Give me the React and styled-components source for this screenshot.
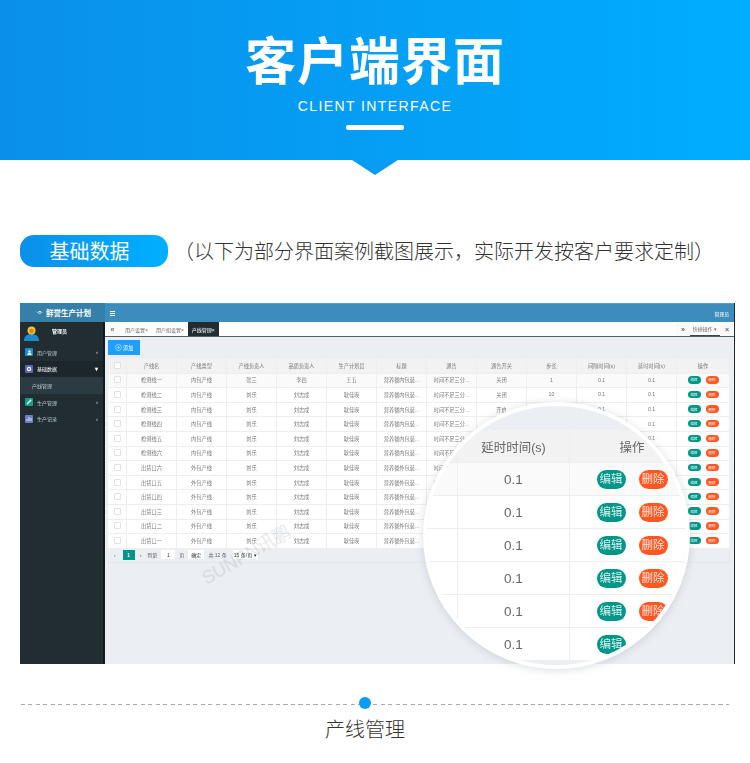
import React from 'react'
import styled, { createGlobalStyle } from 'styled-components'

const GlobalStyle = createGlobalStyle`
  html, body { margin: 0; padding: 0; background: #fff; }
  body { font-family: "Liberation Sans", "Noto Sans CJK SC", sans-serif; }
  * { box-sizing: border-box; }
`

const Page = styled.div`
  width: 750px;
  height: 763px;
  overflow: hidden;
  background: #fff;
`

const Banner = styled.header`
  position: relative;
  height: 160px;
  padding-top: 26px;
  display: flex;
  flex-direction: column;
  align-items: center;
  color: #fff;
  background: linear-gradient(90deg, #0a90ea 0%, #00adff 100%);
  &::after {
    content: "";
    position: absolute;
    left: 352px;
    top: 160px;
    border-left: 23px solid transparent;
    border-right: 23px solid transparent;
    border-top: 15px solid #0a9cf0;
  }
`

const Title = styled.h1`
  margin: 0;
  font: 700 51px/64px "Noto Sans CJK SC", sans-serif;
  letter-spacing: 1px;
`

const SubTitle = styled.div`
  margin-top: 7px;
  font: 400 14px/18px "Liberation Sans", sans-serif;
  letter-spacing: 1.4px;
`

const Bar = styled.div`
  margin-top: 10px;
  width: 58px;
  height: 5px;
  border-radius: 2px;
  background: #fff;
`

const SectionRow = styled.div`
  margin-top: 75px;
  padding-left: 20px;
  display: flex;
  align-items: center;
  gap: 6px;
`

const Pill = styled.div`
  width: 148px;
  height: 32px;
  padding-right: 9px;
  border-radius: 14px;
  display: flex;
  align-items: center;
  justify-content: center;
  color: #fff;
  font: 400 20px/32px "Noto Sans CJK SC", sans-serif;
  background: linear-gradient(90deg, #0a90ea, #00b0ff);
`

const Note = styled.div`
  color: #333;
  font: 300 20px/32px "Noto Sans CJK SC", sans-serif;
`

const ShotWrap = styled.div`
  position: relative;
  margin: 36px 0 0 20px;
  width: 715px;
  height: 361px;
`

const Shot = styled.div`
  width: 715px;
  height: 361px;
  display: grid;
  grid-template-columns: 85px 1fr;
  grid-template-rows: 19px 1fr;
  font-family: "Liberation Sans", "Noto Sans CJK SC", sans-serif;
  filter: blur(0.45px);
  border-right: 1px solid #1a2a33;
`

const LogoCell = styled.div`
  background: #367fa9;
  display: flex;
  align-items: center;
  padding-left: 16px;
  gap: 3px;
  color: #fff;
  font-size: 7.5px;
  font-weight: 700;
`

const TopBar = styled.div`
  background: #3c8dbc;
  border-top: 1px solid #5a9ec8;
  display: flex;
  align-items: center;
  justify-content: space-between;
  padding: 0 5px 0 5px;
  color: #fff;
  font-size: 4.8px;
`

const Side = styled.aside`
  background: #222d32;
  border-right: 2px solid #101a1f;
  color: #b8c7ce;
  font-size: 5px;
`

const UserBox = styled.div`
  height: 22px;
  display: flex;
  gap: 13px;
  padding: 4px 0 0 4px;
  color: #fff;
  font-size: 5px;
  font-weight: 700;
  span { margin-top: 1px; }
`

const MenuItem = styled.div`
  height: 16.5px;
  display: flex;
  align-items: center;
  padding: 0 5px 0 5px;
  gap: 4px;
  background: ${p => (p.$active ? '#1c262b' : 'transparent')};
  color: ${p => (p.$active ? '#fff' : '#b8c7ce')};
  b { font-weight: 400; flex: 1; }
  i { font-style: normal; font-weight: 700; font-size: 6px; }
`

const SubItem = styled.div`
  height: 17px;
  padding-left: 12px;
  display: flex;
  align-items: center;
  background: #2c3b41;
  color: #b8c7ce;
`

const MenuIcon = styled.span`
  width: 8px;
  height: 8px;
  border-radius: 1px;
  background: ${p => p.$color};
  display: flex;
  align-items: center;
  justify-content: center;
`

const Main = styled.main`
  background: #ebeef3;
  display: flex;
  flex-direction: column;
  min-width: 0;
`

const TabBar = styled.div`
  height: 15px;
  background: #fff;
  border-bottom: 1px solid #555f66;
  display: flex;
  align-items: stretch;
  color: #666;
  font-size: 5px;
`

const TabArrow = styled.div`
  width: ${p => p.$w}px;
  display: flex;
  align-items: center;
  justify-content: center;
  background: #fafafa;
  font-size: 7px;
  font-weight: 700;
`

const Tab = styled.div`
  display: flex;
  align-items: center;
  margin-left: ${p => p.$gap || 0}px;
  padding: 0 4px;
  white-space: nowrap;
  background: ${p => (p.$active ? '#222d32' : 'transparent')};
  color: ${p => (p.$active ? '#fff' : '#666')};
`

const TabRight = styled.div`
  margin-left: auto;
  display: flex;
  align-items: stretch;
`

const Quick = styled.div`
  width: 30px;
  display: flex;
  align-items: center;
  justify-content: center;
  border-bottom: 1px solid #444;
`

const Content = styled.div`
  padding: 3px 4px 0 3px;
`

const AddButton = styled.div`
  width: 32px;
  height: 15px;
  background: #1e9fff;
  color: #fff;
  display: flex;
  align-items: center;
  justify-content: center;
  gap: 1.5px;
  font-size: 5.2px;
`

const Table = styled.div`
  margin-top: 4px;
  width: 622px;
  background: #fff;
  color: #777;
  font-size: 5.2px;
`

const Row = styled.div`
  height: 14.6px;
  display: grid;
  grid-template-columns: 19px repeat(11, 50px) 1fr;
  background: ${p => (p.$head ? '#f2f2f2' : p.$alt ? '#fafafa' : '#fff')};
`

const Cell = styled.div`
  display: flex;
  align-items: center;
  justify-content: center;
  gap: 5px;
  white-space: nowrap;
  overflow: hidden;
  padding-bottom: 1px;
  border-right: 1px solid #eee;
  border-bottom: 1px solid #eee;
`

const Check = styled.span`
  width: 7px;
  height: 7px;
  background: #fff;
  border: 1px solid #e2e2e2;
  border-radius: 1px;
`

const SmallBtn = styled.span`
  width: 13px;
  height: 7.5px;
  border-radius: 4px;
  background: ${p => p.$color};
  color: #fff;
  font-size: 3.4px;
  display: flex;
  align-items: center;
  justify-content: center;
`

const Pager = styled.div`
  height: 14px;
  width: 622px;
  display: flex;
  align-items: center;
  color: #666;
  font-size: 5px;
  border-right: 1px solid #e4e6ea;
  border-bottom: 1px solid #e4e6ea;
  padding: 0 0 1px 6px;
`

const PageNo = styled.div`
  width: 12px;
  height: 10px;
  margin: 0 5px 0 7px;
  background: #009688;
  color: #fff;
  font-weight: 700;
  display: flex;
  align-items: center;
  justify-content: center;
`

const PageLabel = styled.span`
  margin-left: ${p => p.$gap || 0}px;
`

const PageBox = styled.div`
  width: ${p => p.$w}px;
  height: 9px;
  margin: 0 4px 0 ${p => p.$gap}px;
  background: #fff;
  color: #333;
  display: flex;
  align-items: center;
  justify-content: center;
`

const Watermark = styled.div`
  position: absolute;
  left: 177px;
  top: 242px;
  transform: rotate(-30deg);
  color: rgba(150, 160, 170, 0.26);
  font: 400 18px/20px "Liberation Sans", "Noto Sans CJK SC", sans-serif;
  white-space: nowrap;
`

const Lens = styled.div`
  position: absolute;
  left: 403px;
  top: 99px;
  width: 267px;
  height: 267px;
  border-radius: 50%;
  border: 4px solid #fff;
  box-shadow: 0 1px 8px rgba(120, 130, 140, 0.28);
  overflow: hidden;
  background: #ebeef3;
  padding-top: 24px;
  font-family: "Liberation Sans", "Noto Sans CJK SC", sans-serif;
  color: #666;
  filter: blur(0.3px);
`

const LensRow = styled.div`
  height: 33px;
  display: grid;
  grid-template-columns: 31px 112px 124px;
  background: ${p => (p.$head ? '#f2f2f2' : p.$alt ? '#fafafa' : '#fff')};
  font-size: ${p => (p.$head ? '12.5px' : '13.5px')};
`

const LensCell = styled.div`
  display: flex;
  align-items: center;
  justify-content: center;
  gap: 13px;
  white-space: nowrap;
  border-right: 1px solid #eee;
  border-bottom: 1px solid #eee;
  &:last-child { border-right: 0; }
`

const LensBtn = styled.span`
  width: 29px;
  height: 19px;
  border-radius: 10px;
  background: ${p => p.$color};
  color: rgba(255, 255, 255, 0.85);
  font-size: 11.5px;
  line-height: 19px;
  text-align: center;
  flex: none;
`

const CaptionLine = styled.div`
  position: relative;
  margin: 40px 0 0 21px;
  width: 708px;
  height: 1px;
  background: repeating-linear-gradient(90deg, #aaa 0 4px, transparent 4px 7.5px);
  &::after {
    content: "";
    position: absolute;
    left: 338px;
    top: -7px;
    width: 12px;
    height: 12px;
    border-radius: 50%;
    background: #0a9bf5;
  }
`

const Caption = styled.div`
  margin-top: 9px;
  padding-right: 20px;
  text-align: center;
  color: #333;
  font: 300 20px/30px "Noto Sans CJK SC", sans-serif;
`

const heads = ['产线名', '产线类型', '产线负责人', '品质负责人', '生产计划员', '标题', '通告', '通告开关', '步长', '间隔时间(s)', '延时时间(s)', '操作']
const names = ['检测线一', '检测线二', '检测线三', '检测线四', '检测线五', '检测线六', '出货口六', '出货口五', '出货口四', '出货口三', '出货口二', '出货口一']

function makeRow(name, i) {
  const inner = i < 6
  return [
    name,
    inner ? '内包产线' : '外包产线',
    i === 0 ? '张三' : '刘乐',
    i === 0 ? '李四' : '刘志成',
    i === 0 ? '王五' : '耿佳瑛',
    inner ? '营养餐内包装...' : '营养餐外包装...',
    '时间不足三分...',
    i === 2 ? '开启' : '关闭',
    i === 1 ? '10' : '1',
    '0.1',
    '0.1',
  ]
}

// cells that sit fully under the magnifier have nothing to show
function underLens(i, j) {
  const x = 127 + 50 * j + 25
  const y = 373 + 14.6 * i + 7.3
  return Math.hypot(x - 556.5, y - 534.5) + 22 < 133
}

function Avatar() {
  return (
    <svg width="15" height="15" viewBox="0 0 15 15">
      <path d="M0 15c0-5 3-7 7.5-7S15 10 15 15z" fill="#1e88d2" />
      <circle cx="7.5" cy="4.5" r="4" fill="#f2c230" />
      <circle cx="7.5" cy="5" r="2.3" fill="#c98f2a" />
    </svg>
  )
}

function Fish() {
  return (
    <svg width="7" height="5" viewBox="0 0 10 6">
      <path d="M0 1c3 3 6 3 10 1-2 3-7 5-10-1z" fill="#bfe3f7" />
      <path d="M3 1c2 0 3 0 5 1-2 1-3 1-5-1z" fill="#fff" />
    </svg>
  )
}

function Menu() {
  return (
    <svg width="5" height="5" viewBox="0 0 5 5">
      <path d="M0 .5h5M0 2.5h5M0 4.5h5" stroke="#fff" strokeWidth="1" />
    </svg>
  )
}

function UserGlyph() {
  return (
    <svg width="5" height="5" viewBox="0 0 5 5">
      <circle cx="2.5" cy="1.4" r="1.2" fill="#fff" />
      <path d="M.5 5c0-1.6.8-2.2 2-2.2s2 .6 2 2.2z" fill="#fff" />
    </svg>
  )
}

function GearGlyph() {
  return (
    <svg width="6" height="6" viewBox="0 0 6 6">
      <circle cx="3" cy="3" r="1.6" fill="none" stroke="#fff" strokeWidth="1.2" />
    </svg>
  )
}

function WrenchGlyph() {
  return (
    <svg width="6" height="6" viewBox="0 0 6 6">
      <path d="M1 5l3-3" stroke="#fff" strokeWidth="1.2" />
      <circle cx="4.5" cy="1.5" r="1" fill="#fff" />
    </svg>
  )
}

function ChartGlyph() {
  return (
    <svg width="6" height="6" viewBox="0 0 6 6">
      <path d="M1 5V3M3 5V1M5 5V2" stroke="#dfe4f5" strokeWidth="1" />
    </svg>
  )
}

function PlusCircle() {
  return (
    <svg width="7" height="7" viewBox="0 0 7 7">
      <circle cx="3.5" cy="3.5" r="3" fill="none" stroke="#d5edff" strokeWidth=".6" />
      <path d="M3.5 1.8v3.4M1.8 3.5h3.4" stroke="#d5edff" strokeWidth=".6" />
    </svg>
  )
}

function App() {
  return (
    <Page>
      <GlobalStyle />
      <Banner>
        <Title>客户端界面</Title>
        <SubTitle>CLIENT INTERFACE</SubTitle>
        <Bar />
      </Banner>

      <SectionRow>
        <Pill>基础数据</Pill>
        <Note>（以下为部分界面案例截图展示，实际开发按客户要求定制）</Note>
      </SectionRow>

      <ShotWrap>
        <Shot>
          <LogoCell><Fish />鲜誉生产计划</LogoCell>
          <TopBar><Menu /><span>管理员</span></TopBar>
          <Side>
            <UserBox><Avatar /><span>管理员</span></UserBox>
            <MenuItem><MenuIcon $color="#1a8fd6"><UserGlyph /></MenuIcon><b>用户管理</b><i>‹</i></MenuItem>
            <MenuItem $active><MenuIcon $color="#5a62c4"><GearGlyph /></MenuIcon><b>基础数据</b><i>▾</i></MenuItem>
            <SubItem>产线管理</SubItem>
            <MenuItem><MenuIcon $color="#12a085"><WrenchGlyph /></MenuIcon><b>生产管理</b><i>‹</i></MenuItem>
            <MenuItem><MenuIcon $color="#6d7fc4"><ChartGlyph /></MenuIcon><b>生产记录</b><i>‹</i></MenuItem>
          </Side>
          <Main>
            <TabBar>
              <TabArrow $w={15}>«</TabArrow>
              <Tab $gap={1}>用户设置×</Tab>
              <Tab>用户组设置×</Tab>
              <Tab $active>产线管理×</Tab>
              <TabRight>
                <TabArrow $w={14}>»</TabArrow>
                <Quick>快捷操作 ▾</Quick>
                <TabArrow $w={14}>×</TabArrow>
              </TabRight>
            </TabBar>
            <Content>
              <AddButton><PlusCircle />添加</AddButton>
              <Table>
                <Row $head>
                  <Cell><Check /></Cell>
                  {heads.map(h => <Cell key={h}>{h}</Cell>)}
                </Row>
                {names.map((n, i) => (
                  <Row key={n} $alt={i === 0}>
                    <Cell><Check /></Cell>
                    {makeRow(n, i).map((v, j) => <Cell key={j}>{underLens(i, j) ? null : v}</Cell>)}
                    <Cell>
                      <SmallBtn $color="#009688">编辑</SmallBtn>
                      <SmallBtn $color="#ff5722">删除</SmallBtn>
                    </Cell>
                  </Row>
                ))}
              </Table>
              <Pager>
                <span>‹</span>
                <PageNo>1</PageNo>
                <span>›</span>
                <PageLabel $gap={6}>到第</PageLabel>
                <PageBox $w={14} $gap={4}>1</PageBox>
                <span>页</span>
                <PageBox $w={16} $gap={4}>确定</PageBox>
                <span>共 12 条</span>
                <PageBox $w={25} $gap={6}>15 条/页 ▾</PageBox>
              </Pager>
            </Content>
          </Main>
        </Shot>
        <Watermark>SUNPN讯鹏</Watermark>
        <Lens>
          <LensRow $head>
            <LensCell />
            <LensCell>延时时间(s)</LensCell>
            <LensCell>操作</LensCell>
          </LensRow>
          {[0, 1, 2, 3, 4, 5].map(i => (
            <LensRow key={i} $alt={i === 0}>
              <LensCell />
              <LensCell>0.1</LensCell>
              <LensCell>
                <LensBtn $color="#009688">编辑</LensBtn>
                <LensBtn $color="#ff5722">删除</LensBtn>
              </LensCell>
            </LensRow>
          ))}
        </Lens>
      </ShotWrap>

      <CaptionLine />
      <Caption>产线管理</Caption>
    </Page>
  )
}

export default App
